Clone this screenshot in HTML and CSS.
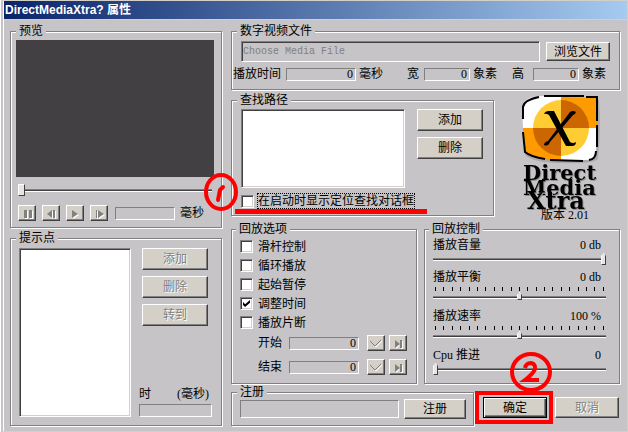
FILE: index.html
```html
<!DOCTYPE html>
<html lang="zh-CN">
<head>
<meta charset="UTF-8">
<title>DirectMediaXtra 属性</title>
<link rel="stylesheet" href="styles.css">
</head>
<body>
<form class="window">
  <h1 class="titlebar">DirectMediaXtra? 属性</h1>

  <div class="content">
    <div class="left">
      <fieldset class="group preview">
        <legend>预览</legend>
        <div class="video"></div>
        <input class="slider seek" type="range" min="0" max="100" value="0" aria-label="播放位置">
        <div class="player">
          <button type="button" class="btn icon-btn" disabled aria-label="暂停">
            <svg width="18" height="15"><path d="M7 5h3v8h-3zM12 5h3v8h-3z" fill="#fff"/><path d="M6 4h3v8h-3zM11 4h3v8h-3z" fill="#808080"/></svg>
          </button>
          <button type="button" class="btn icon-btn" disabled aria-label="后退">
            <svg width="18" height="15"><path d="M11 5v8l-5-4M13 5v8h1v-8z" fill="#fff"/><path d="M10 4v8l-5-4zM11 4h2v8h-2z" fill="#808080"/></svg>
          </button>
          <button type="button" class="btn icon-btn" disabled aria-label="播放">
            <svg width="18" height="15"><path d="M7 5v8l6-4z" fill="#fff"/><path d="M6 4v8l6-4z" fill="#808080"/></svg>
          </button>
          <button type="button" class="btn icon-btn" disabled aria-label="前进">
            <svg width="18" height="15"><path d="M7 5h1v8h-1zM9 5v8l6-4z" fill="#fff"/><path d="M6 4h1v8h-1zM8 4v8l6-4z" fill="#808080"/></svg>
          </button>
          <input class="field time" type="text" id="position" readonly>
          <label for="position">毫秒</label>
        </div>
      </fieldset>

      <fieldset class="group cues">
        <legend>提示点</legend>
        <select class="listbox" multiple aria-label="提示点"></select>
        <div class="cue-side">
          <div class="btn-stack">
            <button type="button" class="btn" disabled>添加</button>
            <button type="button" class="btn" disabled>删除</button>
            <button type="button" class="btn" disabled>转到</button>
          </div>
          <label class="cue-label" for="cueTime"><span>时</span><span>(毫秒)</span></label>
          <input class="field" type="text" id="cueTime" readonly>
        </div>
      </fieldset>
    </div>

    <div class="right">
      <fieldset class="group file">
        <legend>数字视频文件</legend>
        <div class="file-row">
          <input class="file-input" type="text" placeholder="Choose Media File" aria-label="数字视频文件">
          <button type="button" class="btn browse">浏览文件</button>
        </div>
        <div class="info-row">
          <label for="duration">播放时间</label>
          <input class="field wide" type="text" id="duration" value="0" readonly>
          <span class="unit">毫秒</span>
          <label class="info-width" for="vidWidth">宽</label>
          <input class="field" type="text" id="vidWidth" value="0" readonly>
          <span class="unit">象素</span>
          <label class="info-height" for="vidHeight">高</label>
          <input class="field" type="text" id="vidHeight" value="0" readonly>
          <span class="unit">象素</span>
        </div>
      </fieldset>

      <div class="middle">
        <fieldset class="group search">
          <legend>查找路径</legend>
          <div class="search-row">
            <select class="listbox" multiple aria-label="查找路径"></select>
            <div class="btn-stack">
              <button type="button" class="btn">添加</button>
              <button type="button" class="btn">删除</button>
            </div>
          </div>
          <div class="locate">
            <input type="checkbox" id="locate">
            <label class="focused" for="locate">在启动时显示定位查找对话框</label>
            <span class="mark-line"></span>
            <svg class="mark-one" width="36" height="40" viewBox="0 0 36 40" fill="none" stroke="#f00">
              <ellipse cx="18" cy="20" rx="15" ry="17" stroke-width="4"/>
              <path d="M20 15l-3 3-2 10" stroke-width="4" stroke-linecap="round" stroke-linejoin="round"/>
            </svg>
          </div>
        </fieldset>

        <div class="logo">
          <svg width="84" height="115" viewBox="0 0 84 115">
            <path d="M6 5Q42 0 79 5Q81 34 78 64Q74 69 42 68Q14 68 5 60Q2 30 6 5z" fill="#aaa8aa"/>
            <path d="M12 2Q26 0 41 2V33H3Q2 20 4 9Q6 4 12 2z" fill="#fff"/>
            <path d="M41 2L77 3V33H41z" fill="#ff9a00"/>
            <path d="M3 33H41V65Q20 66 5 58Q3 46 3 33z" fill="#ff9a00"/>
            <path d="M41 33H77L76 58Q76 66 62 65H41z" fill="#fff"/>
            <path d="M41 5A28 28 0 0 0 13 33H41z" fill="#ffcc33"/>
            <path d="M41 5A28 28 0 0 1 69 33H41z" fill="#cc6600"/>
            <path d="M13 33A28 28 0 0 0 41 61V33z" fill="#cc6600"/>
            <path d="M41 61A28 28 0 0 0 69 33H41z" fill="#ffcc33"/>
            <path d="M3 24V12Q4 5 19 2M24 1L64 1M66 2H77V26M77 30V52M76 56Q76 64 69 65M63 66L30 65M25 64Q11 62 5 57L3 37" fill="none" stroke="#000" stroke-width="2"/>
            <path d="M24 19Q25 16 29 16H34L50 47Q53 49 56 47Q56 51 52 51H46L29 20Q26 18 24 19z" fill="#000"/>
            <path d="M50 17Q53 15 56 17Q55 20 53 20L30 47Q28 52 24 50Q24 47 28 46z" fill="#000"/>
            <text x="3" y="85">Direct</text>
            <text x="3" y="100">Media</text>
            <text class="xtra" x="7" y="114">Xtra</text>
          </svg>
          <p>版本 2.01</p>
        </div>
      </div>

      <div class="lower">
        <fieldset class="group options">
          <legend>回放选项</legend>
          <div class="check"><input type="checkbox" id="bar"><label for="bar">滑杆控制</label></div>
          <div class="check"><input type="checkbox" id="loop"><label for="loop">循环播放</label></div>
          <div class="check"><input type="checkbox" id="paused"><label for="paused">起始暂停</label></div>
          <div class="check"><input type="checkbox" id="scale" checked><label for="scale">调整时间</label></div>
          <div class="check"><input type="checkbox" id="segment"><label for="segment">播放片断</label></div>
          <div class="range-row">
            <label for="start">开始</label>
            <input class="field wide" type="text" id="start" value="0" readonly>
            <button type="button" class="btn icon-btn" disabled aria-label="设为开始">
              <svg width="18" height="15" fill="none"><path d="M4 6l5 5 6-6" stroke="#fff"/><path d="M3 5l5 5 6-6" stroke="#808080"/></svg>
            </button>
            <button type="button" class="btn icon-btn" disabled aria-label="转到开始">
              <svg width="18" height="15"><path d="M7 5v8l4-4zM12 5h2v8h-2z" fill="#fff"/><path d="M6 4v8l5-4zM11 4h2v8h-2z" fill="#808080"/></svg>
            </button>
          </div>
          <div class="range-row">
            <label for="end">结束</label>
            <input class="field wide" type="text" id="end" value="0" readonly>
            <button type="button" class="btn icon-btn" disabled aria-label="设为结束">
              <svg width="18" height="15" fill="none"><path d="M4 6l5 5 6-6" stroke="#fff"/><path d="M3 5l5 5 6-6" stroke="#808080"/></svg>
            </button>
            <button type="button" class="btn icon-btn" disabled aria-label="转到结束">
              <svg width="18" height="15"><path d="M7 5v8l4-4zM12 5h2v8h-2z" fill="#fff"/><path d="M6 4v8l5-4zM11 4h2v8h-2z" fill="#808080"/></svg>
            </button>
          </div>
        </fieldset>

        <fieldset class="group controls">
          <legend>回放控制</legend>
          <div class="control">
            <div class="control-head"><label for="volume">播放音量</label><output>0 db</output></div>
            <input class="slider" type="range" id="volume" min="0" max="100" value="100">
          </div>
          <div class="control ticked">
            <div class="control-head"><label for="balance">播放平衡</label><output>0 db</output></div>
            <div class="ticks"><i></i><i></i><i></i><i></i><i></i><i></i><i></i><i></i><i></i><i></i><i></i><i></i><i></i><i></i><i></i><i></i><i></i><i></i><i></i><i></i><i></i></div>
            <input class="slider small" type="range" id="balance" min="-100" max="100" value="0">
          </div>
          <div class="control ticked">
            <div class="control-head"><label for="rate">播放速率</label><output>100 %</output></div>
            <div class="ticks"><i></i><i></i><i></i><i></i><i></i><i></i><i></i><i></i><i></i><i></i><i></i><i></i><i></i><i></i><i></i><i></i><i></i><i></i><i></i><i></i><i></i></div>
            <input class="slider small" type="range" id="rate" min="0" max="200" value="100">
          </div>
          <div class="control">
            <div class="control-head"><label for="cpu">Cpu 推进</label><output>0</output></div>
            <input class="slider" type="range" id="cpu" min="0" max="100" value="0">
          </div>
        </fieldset>
      </div>

      <div class="footer">
        <fieldset class="group register">
          <legend>注册</legend>
          <div class="register-row">
            <input class="field" type="text" aria-label="注册" readonly>
            <button type="button" class="btn">注册</button>
          </div>
        </fieldset>
        <div class="ok-wrap">
          <button type="submit" class="btn ok">确定</button>
          <span class="mark-box"></span>
          <svg class="mark-two" width="44" height="42" viewBox="0 0 44 42" fill="none" stroke="#f00">
            <ellipse cx="22" cy="21" rx="19" ry="18" stroke-width="4"/>
            <path d="M16 17Q17 12 22 12Q27 13 26 18Q24 23 16 29H30" stroke-width="4"/>
          </svg>
        </div>
        <button type="button" class="btn cancel" disabled>取消</button>
      </div>
    </div>
  </div>
</form>
</body>
</html>
```

FILE: styles.css
```css
* {
  box-sizing: border-box;
}
body {
  margin: 0;
  background: #c6c4c6;
  color: #000;
  font: 12px/14px "Liberation Serif", "Noto Sans CJK SC", serif;
}
.window {
  min-height: 100vh;
  border: 1px solid #d4d0c8;
  border-left: 4px double #fff;
}
.titlebar {
  margin: 0;
  padding: 0 1px;
  height: 19px;
  background: linear-gradient(to right, #0a246a, #a6caf0);
  border-bottom: 1px solid #d4d0c8;
  color: #fff;
  font: bold 12px/18px "Liberation Sans", "Noto Sans CJK SC", sans-serif;
}
.content {
  display: grid;
  grid-template-columns: 212px 1fr;
  gap: 9px;
  padding: 4px 7px 4px 6px;
}
.left,
.right {
  display: flex;
  flex-direction: column;
}

/* group boxes */
.group {
  --pad: 0px;
  margin: 0;
  padding: 0 0 0 var(--pad);
  min-width: 0;
  border: 1px solid #808080;
  box-shadow: 1px 1px #fff, inset 1px 1px #fff;
}
.group legend {
  margin-left: calc(5px - var(--pad));
  padding: 0 3px;
  height: 14px;
  background: #c6c4c6;
}

/* buttons */
.btn {
  width: 66px;
  height: 22px;
  padding: 0;
  background: #d4d0c8;
  border: 1px solid;
  border-color: #fff #404040 #404040 #fff;
  box-shadow: inset -1px -1px #808080;
  color: #000;
  font: inherit;
}
.btn:disabled {
  color: #808080;
  text-shadow: 1px 1px #fff;
}
.icon-btn {
  width: 18px;
  height: 16px;
  flex: none;
}
.icon-btn svg {
  display: block;
  margin: -1px;
}
.btn-stack {
  display: flex;
  flex-direction: column;
  gap: 6px;
}

/* fields */
.field {
  width: 46px;
  height: 13px;
  min-width: 0;
  padding: 0 2px;
  background: transparent;
  border: 1px solid;
  border-color: #808080 #fff #fff #808080;
  font: inherit;
  line-height: 11px;
  text-align: right;
  outline: none;
}
.field.wide {
  width: 70px;
}
.listbox {
  appearance: none;
  margin: 0;
  background: #fff;
  border: 1px solid;
  border-color: #808080 #fff #fff #808080;
  border-radius: 0;
  box-shadow: inset 1px 1px #404040, inset -1px -1px #d4d0c8;
  outline: none;
}
input[type="checkbox"] {
  appearance: none;
  flex: none;
  width: 13px;
  height: 13px;
  margin: 0;
  background: #fff;
  border: 1px solid;
  border-color: #808080 #fff #fff #808080;
  box-shadow: inset 1px 1px #404040, inset -1px -1px #d4d0c8;
}
input[type="checkbox"]:checked::before {
  content: "";
  display: block;
  width: 7px;
  height: 7px;
  margin: 2px;
  background: #000;
  clip-path: polygon(0 30%, 30% 60%, 100% 0, 100% 40%, 30% 100%, 0 70%);
}

/* sliders */
.slider {
  appearance: none;
  display: block;
  width: 100%;
  height: 12px;
  margin: 0;
  background: linear-gradient(#808080 0 1px, #404040 1px 2px, #fff 2px 3px) left center / 100% 3px no-repeat;
  outline: none;
}
.slider::-webkit-slider-thumb {
  appearance: none;
  width: 5px;
  height: 12px;
  background: #e8e6e2;
  border: 1px solid;
  border-color: #fff #404040 #404040 #fff;
  clip-path: polygon(0 3px, 50% 0, 100% 3px, 100% 100%, 0 100%);
}
.slider.small {
  height: 8px;
  background-position: left bottom 1px;
}
.slider.small::-webkit-slider-thumb {
  height: 8px;
}

/* preview */
.preview {
  --pad: 5px;
  padding: 2px 7px 6px var(--pad);
}
.video {
  height: 137px;
  background: #424042;
}
.seek {
  width: auto;
  min-width: 194px;
  margin: 7px 2px 9px;
}
.seek::-webkit-slider-thumb {
  width: 7px;
  clip-path: none;
}
.player {
  display: flex;
  align-items: center;
  gap: 6px;
  padding-left: 2px;
}
.player .time {
  width: 60px;
  margin-left: 1px;
}
.player label {
  margin-left: -1px;
}

/* cue points */
.cues {
  --pad: 8px;
  flex: 1;
  margin-top: 3px;
  padding: 3px 9px 8px var(--pad);
}
.cues .listbox {
  float: left;
  width: 112px;
  height: 169px;
}
.cue-side {
  display: flex;
  flex-direction: column;
  height: 169px;
  padding-left: 8px;
}
.cue-side .btn-stack {
  flex: 1;
  padding-left: 3px;
}
.cue-label {
  display: flex;
  justify-content: space-between;
  padding: 0 3px 3px 0;
}
.cue-side .field {
  width: 100%;
}

/* media file */
.file {
  padding-bottom: 8px;
}
.file-row {
  display: flex;
  align-items: center;
  gap: 6px;
  padding: 3px 9px 5px;
}
.file-input {
  flex: 1;
  min-width: 0;
  height: 21px;
  padding: 0 1px;
  background: transparent;
  border: 1px solid;
  border-color: #808080 #fff #fff #808080;
  box-shadow: inset 1px 1px #404040;
  font: 10px/14px "Liberation Mono", "Noto Sans CJK SC", monospace;
  outline: none;
}
.file-input::placeholder {
  color: #808080;
}
.browse {
  width: 64px;
  height: 19px;
}
.info-row {
  display: flex;
  align-items: center;
  gap: 5px;
  height: 14px;
  padding-left: 1px;
  white-space: nowrap;
}
.info-row .unit {
  margin-left: -2px;
}
.info-width {
  margin-left: 19px;
}
.info-height {
  margin-left: 10px;
  margin-right: 4px;
}

/* search path and logo */
.middle {
  display: flex;
  align-items: flex-start;
  margin-top: 3px;
}
.search {
  --pad: 9px;
  flex: 0 1 263px;
  padding: 2px 10px 7px var(--pad);
}
.search-row {
  display: flex;
  gap: 12px;
}
.search-row .listbox {
  flex: 1;
  min-width: 0;
  height: 79px;
}
.locate {
  position: relative;
  display: flex;
  align-items: center;
  gap: 4px;
  margin-top: 6px;
  white-space: nowrap;
}
.focused {
  outline: 1px dotted #000;
}
.mark-line {
  position: absolute;
  left: -6px;
  top: 15px;
  width: 192px;
  height: 5px;
  background: #f00;
}
.mark-one {
  position: absolute;
  left: -38px;
  top: -22px;
}
.logo {
  margin: 2px 16px 0 auto;
  text-align: center;
}
.logo svg {
  display: block;
  overflow: visible;
}
.logo text {
  font: bold 21px/1 "DejaVu Serif", serif;
  filter: drop-shadow(1px 1px #908e90);
}
.logo .xtra {
  font-size: 24px;
}
.logo p {
  position: relative;
  margin: -2px 0 0;
  padding-left: 6px;
}

/* playback */
.lower {
  display: flex;
  gap: 7px;
}
.options {
  --pad: 8px;
  flex: 0 0 186px;
  padding: 1px 9px 8px var(--pad);
}
.options legend,
.controls legend {
  margin-left: calc(4px - var(--pad));
}
.check {
  display: flex;
  align-items: center;
  gap: 5px;
  height: 19px;
}
.range-row {
  display: flex;
  align-items: center;
  gap: 4px;
  height: 16px;
  margin-top: 3px;
  padding-left: 18px;
  white-space: nowrap;
}
.range-row + .range-row {
  margin-top: 8px;
}
.range-row .wide {
  margin: 0 4px 0 3px;
}
.controls {
  --pad: 8px;
  flex: 1;
  padding: 2px 13px 0 var(--pad);
}
.control {
  height: 32px;
}
.control.ticked {
  height: 39px;
}
.control-head {
  display: flex;
  justify-content: space-between;
  margin-bottom: 1px;
  padding-right: 5px;
}
.ticks {
  display: flex;
  justify-content: space-between;
  margin: 3px 2px 1px;
}
.ticks i {
  width: 1px;
  height: 4px;
  background: #000;
}

/* bottom row */
.footer {
  display: flex;
  align-items: flex-end;
  margin-top: 1px;
}
.register {
  --pad: 8px;
  flex: 1;
  padding: 0 7px 6px var(--pad);
}
.register-row {
  display: flex;
  align-items: center;
  gap: 5px;
}
.register-row .field {
  flex: 1;
  height: 18px;
}
.register-row .btn {
  width: 62px;
  height: 20px;
}
.ok-wrap {
  position: relative;
  margin: 0 8px 8px 9px;
}
.ok-wrap .btn,
.cancel {
  display: block;
  width: 64px;
  height: 21px;
}
.ok-wrap .ok {
  border-color: #000;
  box-shadow: inset 1px 1px #fff, inset -1px -1px #404040, inset -2px -2px #808080;
}
.cancel {
  margin: 0 1px 8px 0;
}
.mark-box {
  position: absolute;
  inset: -6px -6px -6px -8px;
  border: 4px solid #f00;
  pointer-events: none;
}
.mark-two {
  position: absolute;
  left: 26px;
  top: -46px;
  pointer-events: none;
}
```
